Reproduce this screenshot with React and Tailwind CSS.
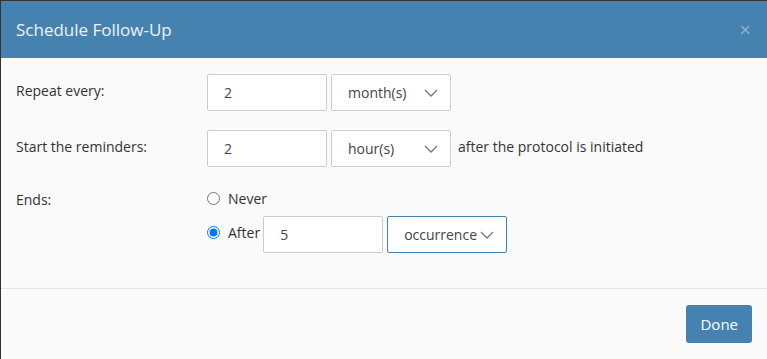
import { useState } from 'react'

function Chevron() {
  return (
    <svg width="14" height="8" viewBox="0 0 14 8" fill="none" className="shrink-0">
      <polyline points="1,1 7,7 13,1" stroke="#777" strokeWidth="1.3" />
    </svg>
  )
}

function Select({ value, focused }) {
  return (
    <div
      className={`h-[37px] w-[120px] flex items-center justify-between pl-4 pr-3 bg-white border rounded-[2px] text-[14px] text-[#444] ${
        focused ? 'border-[#4682b0]' : 'border-[#ccc]'
      }`}
    >
      <span>{value}</span>
      <Chevron />
    </div>
  )
}

function NumberBox({ value }) {
  return (
    <div className="h-[37px] w-[120px] flex items-center px-4 bg-white border border-[#ccc] rounded-[2px] text-[14px] text-[#444]">
      {value}
    </div>
  )
}

export default function App() {
  const [ends, setEnds] = useState('after')

  return (
    <div className="w-[767px] h-[359px] bg-[#fafafa] border-t border-l border-[#333] flex flex-col font-['Open_Sans',sans-serif] text-[14px] text-[#333]">
      <div className="h-[57px] bg-[#4682b0] flex items-center justify-between pl-[15px] pr-[16px]">
        <h1 className="text-[17px] text-[#eef3f8] font-normal">Schedule Follow-Up</h1>
        <span className="text-[20px] leading-none text-[#8fb2cf]">×</span>
      </div>

      <div className="flex-1 border-b border-[#e5e5e5] pt-4 px-[15px] flex flex-col gap-[19px]">
        <div className="flex items-center">
          <div className="w-[191px] -mt-1">Repeat every:</div>
          <div className="flex gap-[4px]">
            <NumberBox value="2" />
            <Select value="month(s)" />
          </div>
        </div>

        <div className="flex items-center">
          <div className="w-[191px] -mt-1">Start the reminders:</div>
          <div className="flex items-center gap-[4px]">
            <NumberBox value="2" />
            <Select value="hour(s)" />
            <span className="ml-[3px] -mt-1">after the protocol is initiated</span>
          </div>
        </div>

        <div className="flex items-start pt-[2px]">
          <div className="w-[191px] mt-[1px]">Ends:</div>
          <div className="flex flex-col gap-[7px]">
            <label className="flex items-center gap-2">
              <input
                type="radio"
                name="ends"
                checked={ends === 'never'}
                onChange={() => setEnds('never')}
                className="w-[13px] h-[13px] m-0"
              />
              <span>Never</span>
            </label>
            <div className="flex items-center">
              <label className="flex items-center gap-2 mr-[3px] -mt-1">
                <input
                  type="radio"
                  name="ends"
                  checked={ends === 'after'}
                  onChange={() => setEnds('after')}
                  className="w-[13px] h-[13px] m-0"
                />
                <span>After</span>
              </label>
              <div className="flex gap-[4px]">
                <NumberBox value="5" />
                <Select value="occurrence" focused />
              </div>
            </div>
          </div>
        </div>
      </div>

      <div className="h-[70px] flex items-start justify-end pt-[16px] pr-[15px]">
        <button className="h-[38px] px-[14px] bg-[#4682b0] text-white text-[15px] rounded-[3px]">Done</button>
      </div>
    </div>
  )
}
